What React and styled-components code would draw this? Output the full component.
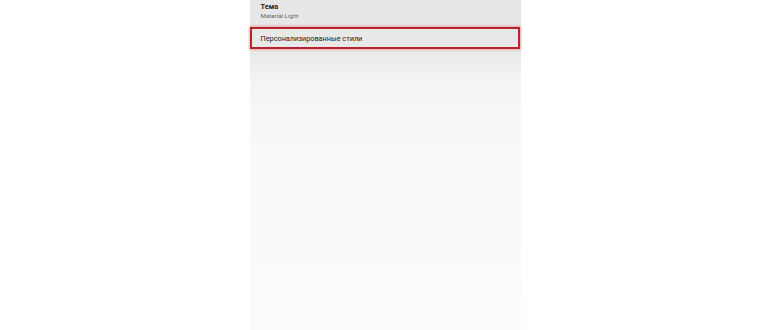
import React from 'react';
import styled, { createGlobalStyle } from 'styled-components';

const GlobalStyle = createGlobalStyle`
  html, body {
    margin: 0;
    padding: 0;
    background: #ffffff;
  }
  body {
    font-family: Roboto, "Noto Sans", "Liberation Sans", sans-serif;
  }
`;

const Page = styled.main`
  display: flex;
  justify-content: center;
  width: 100%;
  height: 330px;
  overflow: hidden;
`;

const Screen = styled.section`
  width: 271px;
  height: 330px;
  display: flex;
  flex-direction: column;
  background: linear-gradient(
    to bottom,
    #e6e6e6 0px,
    #e9e9e9 50px,
    #f3f3f3 80px,
    #f8f8f8 120px,
    #fbfbfb 330px
  );
`;

const Header = styled.div`
  display: flex;
  flex-direction: column;
  padding: 2px 11px 0;
  height: 27px;
  box-sizing: border-box;
`;

const Highlighted = styled.div`
  display: flex;
  align-items: center;
  height: 22px;
  box-sizing: border-box;
  padding: 1px 9px 0;
  border: 2px solid #b8232c;
  box-shadow: 0 0 2px 1px rgba(230, 90, 90, 0.45);
  margin-right: 1px;
`;

const Title = styled.div`
  font-size: 7.3px;
  font-weight: ${(p) => (p.bold ? 700 : 400)};
  color: #222;
  line-height: 10px;
`;

const Subtitle = styled.div`
  font-size: 6.2px;
  color: #666;
  line-height: 9px;
`;

export default function App() {
  return (
    <>
      <GlobalStyle />
      <Page>
        <Screen>
          <Header>
            <Title bold>Тема</Title>
            <Subtitle>Material Light</Subtitle>
          </Header>
          <Highlighted>
            <Title>Персонализированные стили</Title>
          </Highlighted>
        </Screen>
      </Page>
    </>
  );
}
